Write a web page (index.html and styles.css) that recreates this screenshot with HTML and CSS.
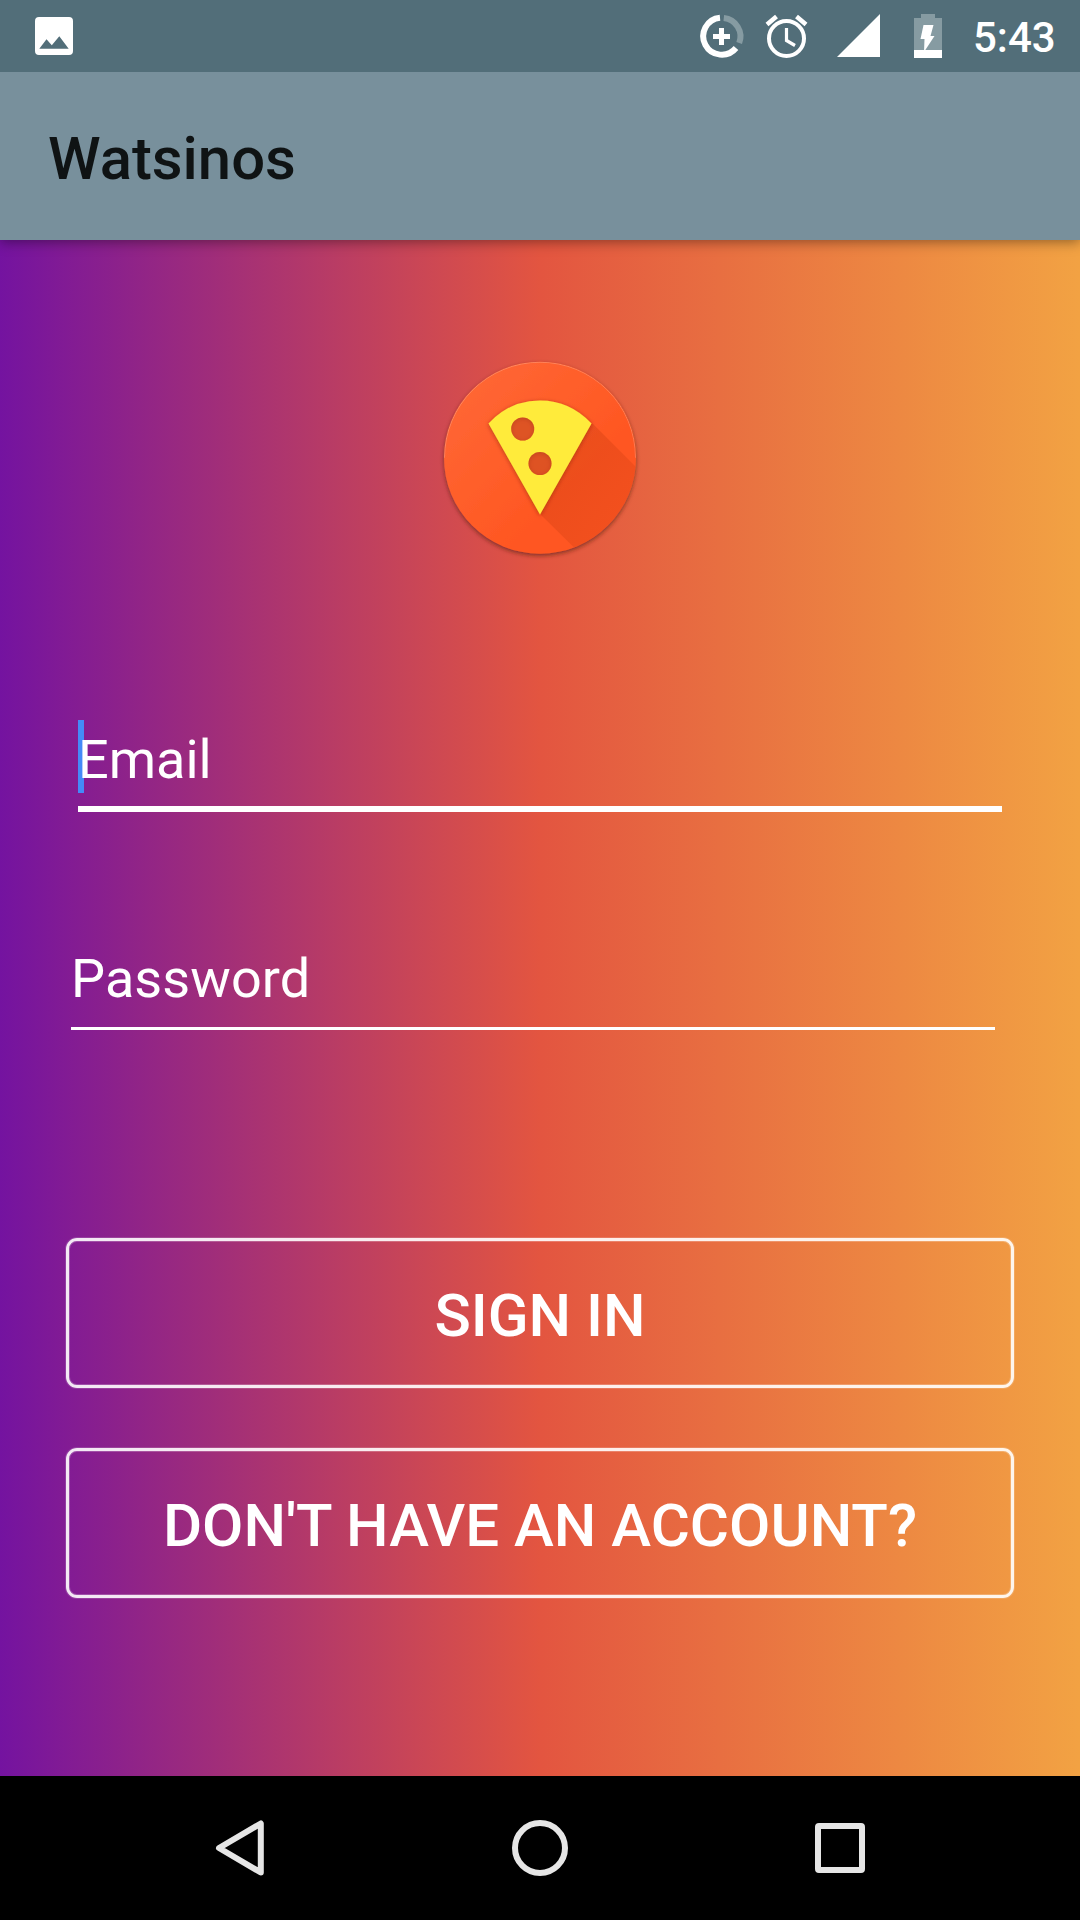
FILE: index.html
```html
<!DOCTYPE html>
<html lang="en">
<head>
<meta charset="utf-8">
<title>Watsinos</title>
<link rel="stylesheet" href="styles.css">
</head>
<body>
<div class="screen">
  <div class="status-bar">
    <svg class="status-icon picture" width="38" height="38" viewBox="0 0 38 38"><path fill="#fff" fill-rule="evenodd" d="M4 0h30q4 0 4 4v30q0 4-4 4H4q-4 0-4-4V4q0-4 4-4zM4.300 31.800H33.700L24.300 19.300 16.800 28.200 11.500 22.300z"/></svg>
    <svg class="status-icon" width="400" height="72" viewBox="0 0 400 72">
      <g fill="none" stroke-width="6">
        <path stroke="#fff" d="M40 17.800A18.500 18.500 0 1 0 56 48"/>
        <path stroke="#869ba2" d="M43.800 18A18.500 18.500 0 0 1 59.200 43"/>
      </g>
      <path stroke="#fff" stroke-width="5" d="M41.500 28v17M33 36.500h17"/>
      <g fill="none" stroke="#fff">
        <circle cx="106.500" cy="38.500" r="17.500" stroke-width="4"/>
        <path stroke-width="3.200" d="M106.500 28v12.500l8.500 5"/>
        <path stroke-width="4.500" d="M87 24.500l9.500-8M126 24.500l-9.500-8"/>
      </g>
      <path fill="#fff" d="M157 57L200 14v43z"/>
      <path fill="#869ba2" d="M241 14h14v4h7v32h-28V18h7z"/>
      <path fill="#fff" d="M234 50h28v8h-28zM243.500 25h10l-3 11h4l-10.500 16 .5-13h-4z"/>
    </svg>
    <span class="clock">5:43</span>
  </div>
  <header class="app-bar"><h1 class="app-title">Watsinos</h1></header>
  <main class="login">
    <svg class="logo" width="220" height="220" viewBox="0 0 220 220">
      <defs>
        <linearGradient id="disc" x1="0" y1="0" x2="1" y2="1"><stop offset="0" stop-color="#ff6a38"/><stop offset=".65" stop-color="#ff5722"/><stop offset="1" stop-color="#ff5722"/></linearGradient>
        <linearGradient id="cast" x1="0" y1="0" x2="1" y2="1"><stop offset="0" stop-color="#bf360c" stop-opacity=".35"/><stop offset="1" stop-color="#bf360c" stop-opacity=".1"/></linearGradient>
        <filter id="soft" x="-20%" y="-20%" width="140%" height="140%"><feDropShadow dx="0" dy="2" stdDeviation="2" flood-color="#4a1a12" flood-opacity=".6"/></filter>
        <filter id="lift" x="-20%" y="-20%" width="140%" height="140%"><feDropShadow dx="0" dy="1" stdDeviation="2" flood-color="#7a1d08" flood-opacity=".55"/></filter>
        <clipPath id="round"><circle cx="110" cy="107.700" r="96"/></clipPath>
      </defs>
      <circle cx="110" cy="107.700" r="96" fill="url(#disc)" filter="url(#soft)"/>
      <path clip-path="url(#round)" fill="url(#cast)" d="M162 73l70 70v90h-52L110 164z"/>
      <path clip-path="url(#round)" fill="none" stroke="#fff" stroke-opacity=".22" d="M14.500 107.700A95.500 95.500 0 0 1 205.500 107.700"/>
      <path filter="url(#lift)" fill="#ffeb3b" fill-rule="evenodd" d="M58.500 73.500Q80 50.500 110 50.500T161.500 73.500L110 164.500zM81.200 79a11.500 11.500 0 1 0 23 0a11.500 11.500 0 1 0-23 0M98.500 113.500a11.500 11.500 0 1 0 23 0a11.500 11.500 0 1 0-23 0"/>
      <circle cx="92.700" cy="79" r="11.500" fill="#c84c22" fill-opacity=".6"/><circle cx="110" cy="113.500" r="11.500" fill="#c84c22" fill-opacity=".6"/>
    </svg>
    <div class="field email"><span class="caret"></span><span class="hint">Email</span></div>
    <div class="field password"><span class="hint">Password</span></div>
    <div class="actions">
      <button class="btn">SIGN IN</button>
      <button class="btn">DON'T HAVE AN ACCOUNT?</button>
    </div>
  </main>
  <nav class="nav-bar">
    <svg width="80" height="96" viewBox="0 0 80 96"><path fill="none" stroke="#e6e6e6" stroke-width="6" stroke-linejoin="round" d="M60.800 23.500V72.500L19 48z"/></svg>
    <svg width="80" height="96" viewBox="0 0 80 96"><circle cx="40" cy="48" r="25" fill="none" stroke="#e6e6e6" stroke-width="6"/></svg>
    <svg width="80" height="96" viewBox="0 0 80 96"><rect x="18" y="26" width="44" height="44" rx="1" fill="none" stroke="#e6e6e6" stroke-width="6" stroke-linejoin="round"/></svg>
  </nav>
</div>
</body>
</html>
```
FILE: styles.css
```css
* { box-sizing: border-box; }
body { margin: 0; font-family: Roboto, sans-serif; }
.screen { width: 1080px; height: 1920px; display: flex; flex-direction: column; overflow: hidden; }
.status-bar { height: 72px; background: #526e79; display: flex; align-items: center; padding-left: 35px; z-index: 2; }
.status-icon { display: block; flex: none; }
.picture { margin-right: 607px; }
.clock { color: #fff; font-size: 42px; font-weight: 500; line-height: 48px; margin-left: -107px; padding-top: 3px; }
.app-bar { height: 168px; background: #78909c; display: flex; align-items: center; padding: 6px 48px 0; z-index: 1; box-shadow: 0 2px 12px rgba(0, 0, 0, .4); }
.app-title { margin: 0; color: #0f1314; font-size: 59.800px; font-weight: 500; line-height: 70px; }
.login { height: 1536px; background: linear-gradient(90deg, #7413a0, #e35540 50%, #f2a243); display: flex; flex-direction: column; align-items: center; padding-top: 110px; }
.logo { display: block; }
.field { width: 924px; color: #fff; display: flex; position: relative; }
.hint { font-size: 54px; line-height: 73px; padding-top: 3px; }
.password .hint { letter-spacing: .1px; }
.email { height: 92px; margin-top: 150px; border-bottom: 6px solid #fff; }
.password { height: 91px; margin: 127px 14px 0 0; border-bottom: 3px solid #fff; }
.caret { position: absolute; left: 0; top: 0; width: 6px; height: 73px; background: #448af8; }
.caret + .hint { position: relative; }
.actions { display: flex; flex-direction: column; gap: 60px; margin-top: 208px; }
.btn { width: 948px; height: 150px; padding: 5px 0 0; border: 3px solid rgba(255, 255, 255, .9); border-radius: 11px; background: none; color: #fff; font: 500 60px/70px Roboto, sans-serif; box-shadow: 0 0 0 1px rgba(255, 255, 255, .15), inset 0 0 0 1px rgba(255, 255, 255, .22); }
.nav-bar { height: 144px; background: #000; display: flex; gap: 220px; justify-content: center; align-items: center; }
```
